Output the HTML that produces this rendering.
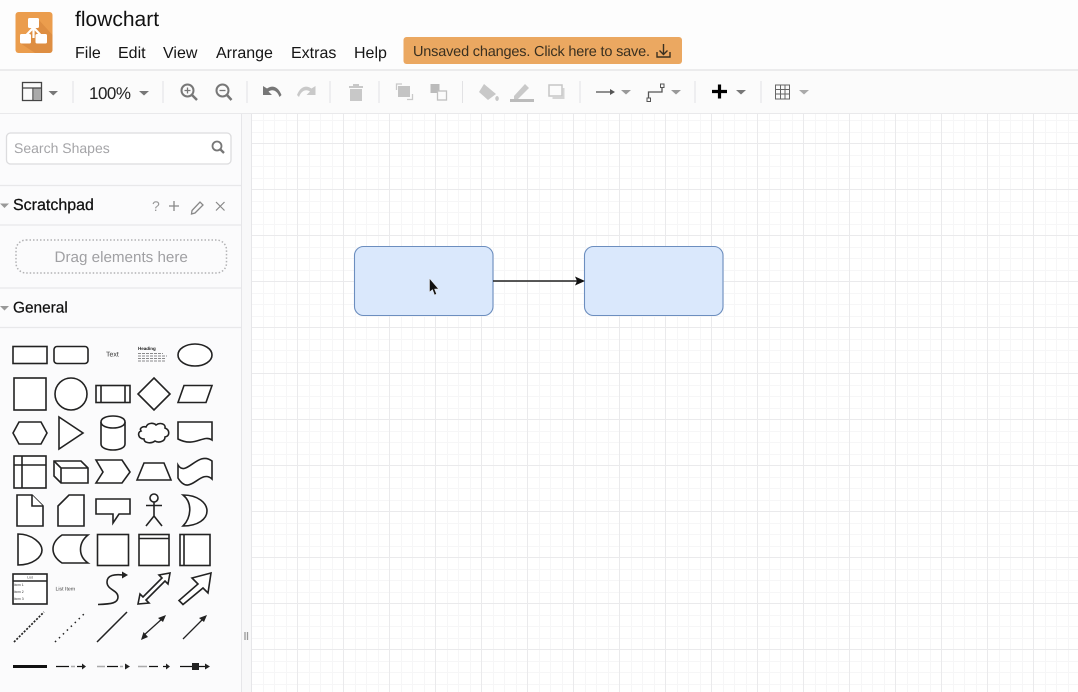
<!DOCTYPE html>
<html><head><meta charset="utf-8"><style>
html,body{margin:0;padding:0;background:#fff}
svg{display:block;font-family:"Liberation Sans",Arial,sans-serif;text-rendering:geometricPrecision}
</style></head><body>
<svg xmlns="http://www.w3.org/2000/svg" width="1078" height="692" viewBox="0 0 1078 692">
<defs>
<pattern id="g" x="251" y="143" width="46" height="46" patternUnits="userSpaceOnUse">
<path d="M12.500 0V46M23.500 0V46M35.500 0V46M0 12.500H46M0 23.500H46M0 35.500H46" stroke="#f6f6f7" fill="none"/>
<path d="M.5 0V46M0 .5H46" stroke="#eaeaec" fill="none"/>
</pattern>
</defs>
<rect width="1078" height="692" fill="#fff"/>
<rect width="1078" height="70" fill="#fdfdfd"/>
<rect y="70" width="1078" height="44" fill="#fbfbfb"/>
<rect y="114" width="241" height="578" fill="#fbfbfc"/>
<rect x="241" y="114" width="11" height="578" fill="#f8f8f9"/>
<rect x="252" y="114" width="826" height="578" fill="#fff"/>
<rect x="252" y="114" width="826" height="578" fill="url(#g)"/>
<path d="M0 70H1078" stroke="#e6e6e8" stroke-width="1.500"/>
<path d="M0 113.500H1078" stroke="#e9e9eb"/>
<path d="M241.500 114V692M251.500 114V692" stroke="#e6e6e9"/>

<!-- logo -->
<rect x="15.500" y="12" width="37" height="41" rx="3" fill="#eb9d4d"/>
<path d="M39 20L52.500 35V50a3 3 0 0 1-3 3H35L20 43Z" fill="#d98a3f" opacity=".75"/>
<g fill="#fff"><rect x="28" y="18" width="11" height="10" rx="1.500"/><rect x="20" y="34" width="11" height="9.500" rx="1.500"/><rect x="35.500" y="34" width="11.500" height="9.500" rx="1.500"/></g>
<path d="M25.500 36L33.500 27.500L41.500 36M33.500 27.500V38" stroke="#fff" stroke-width="2.200" fill="none"/>

<text x="75" y="26" font-size="21" fill="#111">flowchart</text>
<g font-size="16" fill="#151515">
<text x="75" y="58">File</text><text x="118" y="58">Edit</text><text x="163" y="58">View</text><text x="216" y="58">Arrange</text><text x="291" y="58">Extras</text><text x="354" y="58">Help</text>
</g>
<rect x="403.500" y="37" width="278.500" height="27" rx="3" fill="#eba861"/>
<text x="413" y="56" font-size="14.500" fill="#3a3020" textLength="237">Unsaved changes. Click here to save.</text>
<path d="M663.500 44V54M659.500 50.500L663.500 54.500L667.500 50.500M657 52V57H670V52" stroke="#3a3020" stroke-width="1.400" fill="none"/>

<!-- separators -->
<path d="M73 81V103M163 81V103M247 81V103M330 81V103M379 81V103M462.500 81V103M580 81V103M695 81V103M761 81V103" stroke="#e2e2e4"/>

<!-- toolbar -->
<rect x="22.500" y="82.500" width="19" height="18" fill="none" stroke="#444" stroke-width="1.300"/>
<rect x="34" y="88.500" width="7" height="11.500" fill="#aaa"/>
<path d="M22.500 88H41.500M33 88V100.500" stroke="#444" stroke-width="1.300"/>
<g fill="#777"><path d="M48.500 91H58L53.250 95.500Z"/><path d="M139 91H149L144 95.500Z"/></g>
<text x="89" y="99" font-size="17" fill="#222" textLength="42">100%</text>
<g fill="none" stroke="#777" stroke-width="2"><circle cx="187.500" cy="90.500" r="6"/><path d="M192 95L197 100" stroke-width="2.500"/><path d="M184.500 90.500H190.500M187.500 87.500V93.500" stroke-width="1.300"/><circle cx="222.500" cy="90.500" r="6"/><path d="M227 95L231.500 100" stroke-width="2.500"/><path d="M219.500 90.500H225.500" stroke-width="1.300"/></g>
<path d="M263 86V95H272L268.500 91.500C272 89 277 90 279.500 97L281.500 95C278 86 272 85 267 88.500Z" fill="#777"/>
<path d="M315.500 86V95H306.500L310 91.500C306.500 89 301.500 90 299 97L297 95C300.500 86 306.500 85 311.500 88.500Z" fill="#c9c9c9"/>
<path d="M349 86H363V88H349ZM353 84H359V86H353ZM350 89H362V101H350Z" fill="#c8c8c8"/>
<path d="M396.500 90V84H402M407 99.500H412.500V94" fill="none" stroke="#c9c9c9" stroke-width="1.300"/>
<rect x="398" y="86" width="12" height="11" fill="#c4c4c4"/>
<rect x="430.500" y="84" width="9" height="9" fill="#bbb"/><rect x="437.500" y="91" width="9" height="9" fill="#fbfbfb" stroke="#c0c0c0" stroke-width="1.300"/>
<path d="M484 84L496 94L488 100L479 92ZM482 87L478 83M497 96a1.800 2.500 0 1 0 .1 0" fill="#c8c8c8"/>
<path d="M514 96L525 84L529 88L518 99H514Z" fill="#c9c9c9"/><rect x="510" y="99" width="24" height="3" fill="#bbb"/>
<rect x="549" y="85" width="13" height="11" fill="#fbfbfb" stroke="#c6c6c6" stroke-width="1.500"/><path d="M563.500 88V98H552.500" fill="none" stroke="#d5d5d5" stroke-width="2"/>
<path d="M596 92H611" stroke="#555" stroke-width="1.300"/><path d="M610 89L615 92L610 95Z" fill="#555"/>
<path d="M621 90H631L626 94.500Z" fill="#999"/>
<path d="M648.500 99V92H662V85" fill="none" stroke="#555" stroke-width="1.300"/><rect x="647" y="98" width="3.500" height="3.500" fill="#fbfbfb" stroke="#555"/><rect x="660.500" y="84" width="3.500" height="3.500" fill="#fbfbfb" stroke="#555"/>
<path d="M671 90H681L676 94.500Z" fill="#999"/>
<path d="M719.500 84.500V98.500M712 91.500H727" stroke="#000" stroke-width="3.200"/>
<path d="M736 90H746L741 94.500Z" fill="#777"/>
<g fill="none" stroke="#666" stroke-width="1"><rect x="775.500" y="85" width="14" height="14"/><path d="M780.500 85V99M785 85V99M775.500 89.500H789.500M775.500 94H789.500"/></g>
<path d="M799 90H809L804 94.500Z" fill="#aaa"/>

<!-- search -->
<rect x="6.500" y="133" width="224.500" height="31" rx="4" fill="#fff" stroke="#dcdcde" stroke-width="1.300"/>
<text x="14" y="153" font-size="14" fill="#a5a5a8">Search Shapes</text>
<circle cx="217" cy="146" r="4.500" fill="none" stroke="#777" stroke-width="1.800"/><path d="M220.500 149.500L224 153" stroke="#777" stroke-width="2.300"/>

<!-- sections -->
<path d="M0 185.500H241M0 225H241M0 288H241M0 327.500H241" stroke="#e8e8ea" stroke-width="1.200"/>
<path d="M0 203.500H9L4.500 208Z M0 306H9L4.500 310.500Z" fill="#999"/>
<g stroke="#111" stroke-width=".25" fill="#111">
<text x="13" y="210" font-size="16">Scratchpad</text>
<text x="13" y="312.500" font-size="15.400">General</text>
</g>
<text x="152" y="211" font-size="14" fill="#999">?</text>
<path d="M174 201V211M169 206H179" stroke="#888" stroke-width="1.300"/>
<path d="M192 210.500L200 202L203 205L195 213L191.500 214Z" fill="none" stroke="#888" stroke-width="1.300"/>
<path d="M216 202L224.500 210.500M224.500 202L216 210.500" stroke="#888" stroke-width="1.200"/>
<rect x="16" y="240" width="210.500" height="33" rx="10" fill="none" stroke="#b2b2b4" stroke-width="1.500" stroke-dasharray="1.500 2"/>
<text x="54.500" y="262" font-size="15.200" fill="#a0a0a3">Drag elements here</text>

<!-- palette -->
<g fill="#fff" stroke="#222" stroke-width="1.600">
<rect x="13" y="346.500" width="34" height="17"/>
<rect x="54" y="346.500" width="34" height="17" rx="3"/>
<ellipse cx="195" cy="355" rx="17" ry="11"/>
<rect x="14" y="378" width="32" height="32"/>
<circle cx="71" cy="394" r="16"/>
<rect x="96" y="385.500" width="34" height="17"/><path d="M101 385.500V402.500M125 385.500V402.500"/>
<path d="M154 378L170 394L154 410L138 394Z"/>
<path d="M178 402.500L184 385.500H212L206 402.500Z"/>
<path d="M13 433L19 422H41L47 433L41 444H19Z"/>
<path d="M59 417L83 433L59 449Z"/>
<path d="M101 422C101 414 125 414 125 422V444C125 452 101 452 101 444Z"/><path d="M101 422C101 430 125 430 125 422"/>
<path d="M146 427C148 422 154 423 156 425C160 422 166 424 165 428C170 430 170 436 165 437C165 442 158 443 155 441C151 444 144 443 144 439C138 439 137 432 141 431C139 428 143 426 146 427Z"/>
<path d="M178 422H212V440C203 434 195 448 178 439Z"/>
<rect x="14" y="456" width="32" height="32"/><path d="M22 456V488M14 465H46"/>
<path d="M54 461H81L88 468V483H61L54 476Z"/><path d="M54 461L61 468V483M61 468H88"/>
<path d="M96 460H122L130 472L122 483H96L103 472Z"/>
<path d="M137 480L144 463H164L171 480Z"/>
<path d="M178 465C186 478 198 450 212 461V479C200 468 190 498 178 478Z"/>
<path d="M17 495H32L43 506V526H17Z"/><path d="M32 495V506H43"/>
<path d="M58 526V506L69 495H84V526Z"/>
<path d="M96 499H130V514H119L113 523V514H96Z"/>
<circle cx="154" cy="498" r="4"/><path d="M154 502V516M146 505.500H162M154 516L146 526M154 516L162 526" fill="none"/>
<path d="M183 495C198 495 207 503 207 511C207 519 198 526 183 526C191 518 193 503 183 495Z"/>
<path d="M18 534C33 534 42 544 42 550C42 557 33 565 18 565Z"/>
<path d="M62 535H88C78 543 78 556 88 563H62C50 555 50 543 62 535Z"/>
<rect x="97.500" y="534.500" width="31" height="31"/>
<rect x="139" y="534.500" width="30" height="31"/><path d="M139 538.500H169"/>
<rect x="180" y="534.500" width="30" height="31"/><path d="M184 534.500V565.500"/>
<rect x="13" y="574" width="34" height="30"/><path d="M13 581H47"/>
<path d="M98 604.500C112 604 118 603 118 597C118 590 107 590 107 582C107 575 115 574 123 575" fill="none"/>
<path d="M138 604L140 594L143 597L162 578L159 575L170 573L168 584L165 581L146 600L149 603Z"/>
<path d="M211 573L192 578L198 584L179 600.500L183 604.500L203 588L208 593Z"/>
</g>
<path d="M122 571.500L128 575L122 578.500Z" fill="#222"/>
<g fill="none" stroke="#222">
<path d="M14 642L44 612" stroke-width="1.700" stroke-dasharray="2 1.500"/>
<path d="M55 642L84 614" stroke-width="1.500" stroke-dasharray="1.500 4"/>
<path d="M97 642L127 612" stroke-width="1.500"/>
<path d="M143 636L163 618" stroke-width="1.300"/>
<path d="M183 639L204 618" stroke-width="1.300"/>
</g>
<g fill="#222"><path d="M141 640L143.500 632L148 637Z M166 615L158 618L163 622Z M207 615L199 618L204 622Z"/></g>
<g stroke="#111" fill="none"><path d="M13 666.500H47" stroke-width="3"/><path d="M56 666.500H69M77 666.500H83" stroke-width="1.300"/><path d="M107 666.500H118M125 666.500H127" stroke-width="1.300"/><path d="M149 666.500H158M163 666.500H166" stroke-width="1.300"/><path d="M180 666.500H207" stroke-width="1.300"/></g>
<g fill="#222"><path d="M82 663.500L86 666.500L82 669.500Z M125 663.500L130 666.500L125 669.500Z M166 663.500L170 666.500L166 669.500Z M205 663.500L210 666.500L205 669.500Z"/><rect x="192" y="663" width="7" height="7"/></g>
<path d="M97 666.500H105M138 666.500H147M71 666.500H75M120 666.500H123" stroke="#aaa" stroke-width="1.500"/>
<text x="106" y="356.500" font-size="7" fill="#333">Text</text>
<text x="138" y="350" font-size="4.500" font-weight="700" fill="#222">Heading</text>
<path d="M138 353.500H163M138 356H167M138 358.500H166M138 361H165" stroke="#666" stroke-width=".8" stroke-dasharray="3 1"/>
<text x="55.500" y="590.500" font-size="5.200" fill="#444">List Item</text>
<text x="30" y="578.500" font-size="3.500" fill="#333" text-anchor="middle">List</text>
<g font-size="3.500" fill="#333"><text x="14" y="586">Item 1</text><text x="14" y="593">Item 2</text><text x="14" y="600">Item 3</text></g>
<path d="M245 632V640M247.500 632V640" stroke="#999" stroke-width="1.300"/>

<!-- diagram -->
<rect x="354.500" y="246.500" width="138.500" height="69" rx="9" fill="#dae8fc" stroke="#6c8ebf" stroke-width="1.100"/>
<rect x="584.500" y="246.500" width="138.500" height="69" rx="9" fill="#dae8fc" stroke="#6c8ebf" stroke-width="1.100"/>
<path d="M493 281H578" stroke="#222" stroke-width="1.400"/>
<path d="M575 276.500L585 281L575 285.500L577 281Z" fill="#111"/>
<path d="M429.500 278.500V292L432.500 289.500L434.500 295L436.500 294L434.500 289H438.500Z" fill="#111" stroke="#eee" stroke-width=".5"/>
</svg>
</body></html>
